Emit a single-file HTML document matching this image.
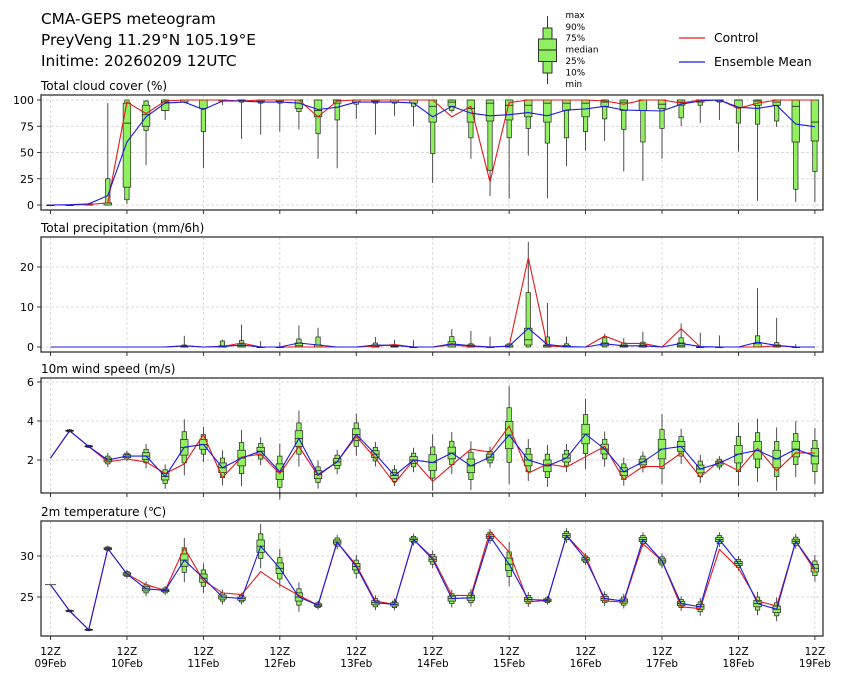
<!DOCTYPE html>
<html><head><meta charset="utf-8"><style>
html,body{margin:0;padding:0;background:#fff;}
svg{display:block;font-family:"DejaVu Sans","Liberation Sans",sans-serif;}
</style></head><body>
<svg id="s" width="841" height="680" xmlns="http://www.w3.org/2000/svg">
<text x="41" y="24" font-size="15.3" fill="#000">CMA-GEPS meteogram</text>
<text x="41" y="45" font-size="15.3" fill="#000">PreyVeng 11.29°N 105.19°E</text>
<text x="41" y="66" font-size="15.3" fill="#000">Initime: 20260209 12UTC</text>
<g stroke="#222" stroke-width="0.9">
<line x1="547.5" y1="16" x2="547.5" y2="28"/><line x1="547.5" y1="73" x2="547.5" y2="84"/>
<rect x="543" y="28" width="9" height="45" fill="#90f060"/>
<rect x="538.5" y="39" width="18" height="22.5" fill="#90f060"/>
<line x1="538.5" y1="50" x2="556.5" y2="50"/>
</g>
<g font-size="8.8" fill="#000">
<text x="565.5" y="18">max</text><text x="565.5" y="30">90%</text><text x="565.5" y="41">75%</text><text x="565.5" y="52.5">median</text><text x="565.5" y="64">25%</text><text x="565.5" y="75.5">10%</text><text x="565.5" y="87">min</text>
</g>
<line x1="679" y1="38" x2="705" y2="38" stroke="#e41a1a" stroke-width="1.2"/>
<line x1="679" y1="62" x2="705" y2="62" stroke="#1a1ae4" stroke-width="1.2"/>
<text x="714" y="42" font-size="12.3">Control</text>
<text x="714" y="66" font-size="12.3">Ensemble Mean</text>
<g id="g"></g>
</svg>
<script>
var NS="http://www.w3.org/2000/svg",G=document.getElementById("g");
function el(t,a,txt){var e=document.createElementNS(NS,t);for(var k in a)e.setAttribute(k,a[k]);if(txt!=null)e.textContent=txt;G.appendChild(e);return e;}
function X(i){return 50.5+19.11*i;}
var L=41,R=823;
function panel(top,bot,title,ticks,fy,data,mean,ctrl){
  el("text",{x:41,y:top-5,"font-size":12},title);
  for(var d=0;d<=10;d++){var x=X(d*4);el("line",{x1:x,y1:top,x2:x,y2:bot,stroke:"#ccc","stroke-width":0.7,"stroke-dasharray":"3,2"});
    el("line",{x1:x,y1:bot,x2:x,y2:bot+4,stroke:"#222","stroke-width":0.9});}
  ticks.forEach(function(t){var y=fy(t);el("line",{x1:L,y1:y,x2:R,y2:y,stroke:"#ccc","stroke-width":0.7,"stroke-dasharray":"3,2"});
    el("line",{x1:L-4,y1:y,x2:L,y2:y,stroke:"#222","stroke-width":0.9});
    el("text",{x:34,y:y+4,"font-size":11,"text-anchor":"end"},String(t));});
  data.forEach(function(s,i){if(!s)return;var x=X(i);
    el("line",{x1:x,y1:fy(s[6]),x2:x,y2:fy(s[0]),stroke:"#222","stroke-width":0.8});
    el("rect",{x:x-2.2,y:fy(s[5]),width:4.4,height:Math.max(fy(s[1])-fy(s[5]),0.6),fill:"#90f060",stroke:"#222","stroke-width":0.7});
    el("rect",{x:x-3.8,y:fy(s[4]),width:7.6,height:Math.max(fy(s[2])-fy(s[4]),0.6),fill:"#90f060",stroke:"#222","stroke-width":0.7});
    el("line",{x1:x-3.8,y1:fy(s[3]),x2:x+3.8,y2:fy(s[3]),stroke:"#222","stroke-width":0.8});});
  function pl(a,c){el("polyline",{points:a.map(function(v,i){return X(i).toFixed(1)+","+fy(v).toFixed(1)}).join(" "),fill:"none",stroke:c,"stroke-width":1.1});}
  pl(ctrl,"#e41a1a");pl(mean,"#1a1ae4");
  el("rect",{x:L,y:top,width:R-L,height:bot-top,fill:"none",stroke:"#222","stroke-width":1.2});
}
function gen(mean,sp){return mean.map(function(m,i){var s=sp[i];return [m-1.8*s,m-s,m-0.5*s,m,m+0.5*s,m+s,m+1.8*s];});}
var C=[[0,0,0,0,0,0,0],[0,0,0,0,0,0,0.5],[0,0,0,0,1,1,2],[0,0,0,2,2,25,97],[1,5,17,78,97,100,100],[38,71,75,86,95,99,100],[81,90,90,98,100,100,100],[97,98,98,100,100,100,100],[35,70,92,100,100,100,100],[95,99,99,100,100,100,100],[63,98,99,100,100,100,100],[67,97,99,100,100,100,100],[70,97,99,100,100,100,100],[72,89,92,100,100,100,100],[44,68,84,90,100,100,100],[35,81,97,100,100,100,100],[82,96,98,100,100,100,100],[67,97,99,100,100,100,100],[85,97,98,100,100,100,100],[75,94,97,100,100,100,100],[21,49,79,94,100,100,100],[88,90,94,98,100,100,100],[44,64,79,92,100,100,100],[8.5,33,80,97,100,100,100],[6,64,81,95,100,100,100],[47,73,84,95,100,100,100],[6.5,59,79,97,100,100,100],[37,64,90,97,100,100,100],[52,70,84,97,100,100,100],[61,82,94,98,100,100,100],[32,72,90,98,100,100,100],[23,60,90,100,100,100,100],[44,73,92,96,100,100,100],[75,83,95,98,100,100,100],[78,95,98,100,100,100,100],[81,98,99,100,100,100,100],[51,78,93,100,100,100,100],[4,77,95,99,100,100,100],[74.5,80,95,98,100,100,100],[3,15,60,94,100,100,100],[3,32,61,79,100,100,100]];
var Cm=[0,0.3,1,9,60,84,97,98,91,99,99,98,98,97,91,93,98,98,98,97,84,94,87.5,85,86,88,85,90.5,91.5,94,90.5,90,89.5,96,99,100,93,92,95,77,74.6];
var Cc=[0,0,0.5,2,98,87,99,100,100,100,99,100,100,100,84,99,100,100,100,100,100,84,94,22,97.5,100,100,100,100,99,96,100,100,97,100,100,92,97,100,100,100];
panel(95,210,"Total cloud cover (%)",[0,25,50,75,100],function(v){return 205-1.05*v;},C,Cm,Cc);
var P=[],Pm=[],Pc=[];for(var i=0;i<41;i++){P.push([0,0,0,0,0,0,0]);Pm.push(0);Pc.push(0);}
var ps={7:[[0,0,0,0,0.3,0.5,2.8],.3,.3],9:[[0,0,0,0,0.3,1.5,1.8],.1,.1],10:[[0,0,0,0.3,0.8,1.6,5.6],.5,1],11:[[0,0,0,0,0,0,1.5],0,0],12:[[0,0,0,0,0,0,1.2],0,0],13:[[0,0,0,0.3,1,2,5.4],1,0],14:[[0,0,0,0,0.5,2.5,4.8],.5,0],17:[[0,0,0,0,0.5,1,2.5],.5,.2],18:[[0,0,0,0,.2,.4,1.8],.4,.6],19:[[0,0,0,0,0,0,1.7],0,0],21:[[0,0,0,.5,1.3,2.6,4.5],.8,.5],22:[[0,0,0,0,.5,.8,4],.3,.1],23:[[0,0,0,0,0,0,2.6],0,0],24:[[0,0,0,0,.5,.8,.8],.2,.2],25:[[0,0,0.5,1.8,4.7,13.6,26.3],4.7,22.3],26:[[0,0,0,.3,.5,2.5,11],.6,.3],27:[[0,0,0,0,.4,.8,2.6],.1,0],29:[[0,0,.3,.8,1,2.3,3.3],.8,2.75],30:[[0,0,0,.2,.5,1,2.2],.3,.9],31:[[0,0,0,.2,.5,1.2,3.8],.3,.9],33:[[0,0,0,.3,1,2.3,5.9],.9,4.6],34:[[0,0,0,0,0,0,3.6],.1,0],35:[[0,0,0,0,0,0,2.9],0,0],37:[[0,0,0,0,.8,2.8,14.7],1.2,0],38:[[0,0,0,.2,.5,1.1,7.3],.4,.3],39:[[0,0,0,0,0,0,.7],0,0]};
for(var k in ps){P[k]=ps[k][0];Pm[k]=ps[k][1];Pc[k]=ps[k][2];}
var Pb=P.map(function(s){return s[6]>0?s:null;});
panel(237,352,"Total precipitation (mm/6h)",[0,10,20],function(v){return 347-4*v;},Pb,Pm,Pc);
var Wm=[2.1,3.5,2.7,2.0,2.2,2.2,1.15,2.65,2.8,1.6,2.1,2.45,1.4,3.1,1.25,1.9,3.3,2.3,1.2,2.0,1.87,2.36,1.7,2.15,3.28,2.0,1.7,2.1,3.33,2.56,1.4,1.9,2.56,2.7,1.54,1.84,2.3,2.5,2.05,2.56,2.2];
var Wc=[2.1,3.5,2.7,1.9,2.05,1.9,1.3,1.8,3.3,1.1,2.15,2.3,1.3,2.7,1.2,1.9,3.2,2.1,0.8,2.0,0.9,1.74,2.56,2.4,3.74,1.33,1.8,1.64,2.17,2.7,1.0,1.66,1.66,2.36,1.13,1.95,1.45,2.6,1.45,2.37,2.36];
var Ws=[0,0.05,0.05,0.2,0.15,0.35,0.35,0.8,0.5,0.5,0.8,0.4,0.8,0.8,0.4,0.35,0.6,0.35,0.3,0.35,0.8,0.6,0.7,0.3,1.4,0.6,0.6,0.4,1.0,0.5,0.4,0.3,1.0,0.5,0.4,0.2,0.9,0.9,0.9,0.8,0.8];
var W=gen(Wm,Ws);W[0]=null;
panel(378,493,"10m wind speed (m/s)",[2,4,6],function(v){return 499-19.5*v;},W,Wm,Wc);
var Tm=[26.5,23.3,21.0,30.9,27.8,26.0,25.8,29.5,27.3,25.0,24.8,31.2,28.5,25.0,24.0,31.7,28.7,24.3,24.1,32.0,29.6,24.8,24.9,32.4,29.0,24.7,24.6,32.5,29.6,24.8,24.5,32.0,29.4,24.2,23.8,32.0,29.1,24.2,23.5,31.8,28.5];
var Tc=[26.5,23.3,21.0,30.9,27.8,26.5,25.8,31.0,27.0,25.5,25.3,28.1,26.5,25.2,24.0,31.7,28.9,24.5,24.1,32.0,29.8,25.2,25.2,33.0,30.5,24.4,24.6,32.5,30.0,24.5,24.4,31.5,29.4,23.8,23.6,30.8,28.5,24.5,23.9,31.8,28.2];
var Ts=[0,0.1,0.1,0.2,0.3,0.5,0.3,1.5,1.0,0.5,0.4,1.5,1.3,1.0,0.3,0.5,0.8,0.5,0.4,0.4,0.6,0.6,0.6,0.5,1.5,0.5,0.3,0.5,0.4,0.5,0.5,0.5,0.5,0.5,0.6,0.5,0.5,0.8,0.8,0.5,0.9];
var T=gen(Tm,Ts);T[0]=null;
panel(521,636,"2m temperature (\u2103)",[25,30],function(v){return 556-8.2*(v-30);},T,Tm,Tc);
el("line",{x1:45,y1:597-8.2*(1.5),x2:56,y2:597-8.2*1.5,stroke:"#222","stroke-width":0.8});
var days=["09Feb","10Feb","11Feb","12Feb","13Feb","14Feb","15Feb","16Feb","17Feb","18Feb","19Feb"];
days.forEach(function(d,j){var x=X(j*4);el("text",{x:x,y:655,"font-size":10.5,"text-anchor":"middle"},"12Z");el("text",{x:x,y:667,"font-size":10.5,"text-anchor":"middle"},d);});
</script>
</body></html>
